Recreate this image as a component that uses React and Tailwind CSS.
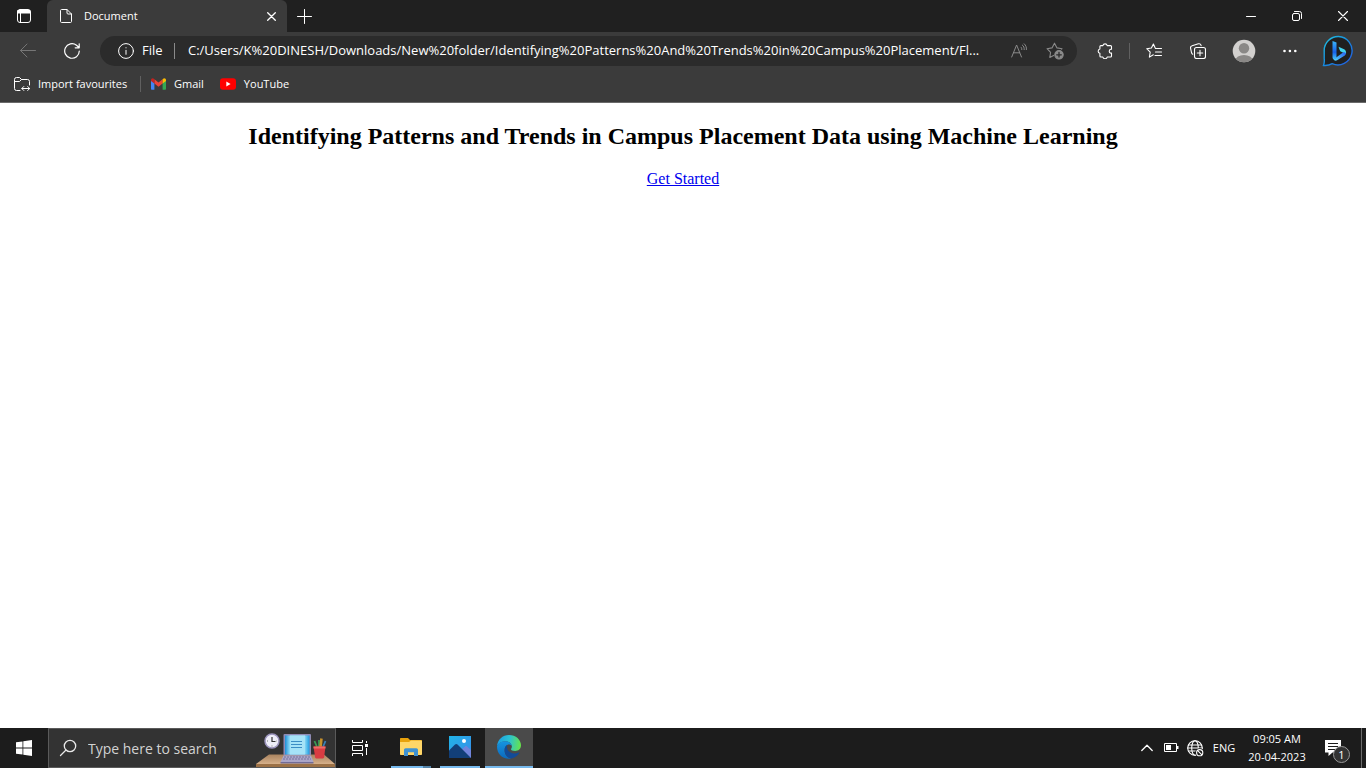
import React from "react";

const uiFont = "font-['Segoe_UI','Open_Sans',sans-serif]";

function Icon({ children, className = "", size = 16, box = 16, width = 1 }) {
  return (
    <svg
      width={size}
      height={size}
      viewBox={`0 0 ${box} ${box}`}
      fill="none"
      stroke="currentColor"
      strokeWidth={width}
      strokeLinecap="round"
      strokeLinejoin="round"
      className={`shrink-0 ${className}`}
      aria-hidden="true"
    >
      {children}
    </svg>
  );
}

function IconButton({ label, className = "", children }) {
  return (
    <button
      type="button"
      aria-label={label}
      className={`flex shrink-0 items-center justify-center ${className}`}
    >
      {children}
    </button>
  );
}

function TitleBar() {
  return (
    <div className="flex h-8 bg-[#202020] text-white">
      <IconButton label="Tab actions menu" className="w-[47px]">
        <Icon>
          <rect x="1.5" y="1.5" width="13" height="13" rx="2.5" />
          <path d="M2 2.5h12v2.5H2z" fill="currentColor" />
          <path d="M4.5 4v10" />
        </Icon>
      </IconButton>
      <div className="flex w-60 items-center rounded-t-md bg-[#3b3b3b] pr-2 pl-3">
        <Icon size={14} box={14}>
          <path d="M1.5 1.5c0-.6.4-1 1-1H8l4.5 4.5v7.5c0 .6-.4 1-1 1h-9c-.6 0-1-.4-1-1z" />
          <path d="M8 .5V4c0 .6.4 1 1 1h3.5" />
        </Icon>
        <span className="ml-[11px] flex-1 text-[11px]">Document</span>
        <IconButton label="Close tab" className="size-4">
          <Icon size={9} box={9} width={1.3}>
            <path d="M.7.7l7.600 7.600M8.300.7L.7 8.300" />
          </Icon>
        </IconButton>
      </div>
      <IconButton label="New tab" className="w-[34px]">
        <Icon>
          <path d="M8.5 1.500v14M1.500 8.500h14" />
        </Icon>
      </IconButton>
      <div className="flex-1" />
      <IconButton label="Minimise" className="w-[46px]">
        <Icon size={10} box={10}>
          <path d="M.5 5.500h9" />
        </Icon>
      </IconButton>
      <IconButton label="Restore" className="w-[46px]">
        <Icon size={10} box={10}>
          <rect x=".5" y="2.500" width="7" height="7" rx="1.500" />
          <path d="M2.500 .5H7.500a2 2 0 0 1 2 2v5" />
        </Icon>
      </IconButton>
      <IconButton label="Close" className="w-[46px]">
        <Icon size={10} box={10} width={1.1}>
          <path d="M.5.5l9 9M9.500.5l-9 9" />
        </Icon>
      </IconButton>
    </div>
  );
}

function BingLogo() {
  return (
    <svg width="32" height="32" viewBox="0 0 32 32" aria-hidden="true">
      <defs>
        <linearGradient id="bing-ring" x1="0" y1="0" x2="1" y2="1">
          <stop offset="0" stopColor="#20c3df" />
          <stop offset=".5" stopColor="#1789df" />
          <stop offset="1" stopColor="#2456df" />
        </linearGradient>
        <linearGradient id="bing-stem" x1="0" y1="0" x2="0" y2="1">
          <stop offset="0" stopColor="#3bb6fa" />
          <stop offset=".6" stopColor="#1860e8" />
          <stop offset="1" stopColor="#42c7ff" />
        </linearGradient>
        <linearGradient id="bing-bowl" x1="1" y1="0" x2="0" y2="1">
          <stop offset="0" stopColor="#285cf0" />
          <stop offset="1" stopColor="#53d8ff" />
        </linearGradient>
      </defs>
      <path
        d="M16.5 1.500a14.200 14.200 0 1 1-6.300 27.200c-2.500 1.500-5 2.100-8.700 1.800 1-2.500 1-4.500.7-6.800V15.500A14 14 0 0 1 16.500 1.500z"
        fill="#202020"
        stroke="url(#bing-ring)"
        strokeWidth="1.400"
      />
      <path d="M10.500 6l4 1.600v15l-2.400 2c-1-.5-1.600-1.300-1.600-2.400z" fill="url(#bing-stem)" />
      <path d="M16.500 11.700l5.600 2.600c1.700 1 2.300 2.600 1.900 4.800l-4.700-2.300c-.8-.4-1.300-1-1.600-1.900z" fill="#42d5ee" />
      <path d="M11.500 24.800c.7.900 2.400 1.200 4 .3l6.500-4c1.200-.8 1.900-1.700 2-3l-2.300-1.100-7.200 5.200z" fill="url(#bing-bowl)" />
    </svg>
  );
}

function Toolbar() {
  return (
    <div className="flex h-[38px] items-center px-1.5 text-white">
      <IconButton label="Back" className="h-8 w-11 text-[#767676]">
        <Icon>
          <path d="M.5 7.500H15.500M7 1L.5 7.500 7 14" />
        </Icon>
      </IconButton>
      <IconButton label="Refresh" className="h-8 w-11">
        <Icon width={1.2}>
          <path d="M15.300 8A7.300 7.300 0 1 1 12.500 2.200L15 4.500M15.200.8v4h-4" />
        </Icon>
      </IconButton>
      <div className="ml-1.5 flex h-[30px] min-w-0 flex-1 items-center rounded-full bg-[#2b2b2b] pr-1 pl-[18px]">
        <Icon>
          <circle cx="8" cy="8" r="7.400" />
          <path d="M8 7.300v4M8 4.700v.2" />
        </Icon>
        <label htmlFor="address" className="ml-2 w-8 text-[13px]">
          File
        </label>
        <span className="h-4 w-px bg-[#8a8a8a]" />
        <input
          id="address"
          type="text"
          defaultValue="C:/Users/K%20DINESH/Downloads/New%20folder/Identifying%20Patterns%20And%20Trends%20in%20Campus%20Placement/Fl..."
          className="ml-[13px] min-w-0 flex-1 bg-transparent text-[13px] outline-none"
        />
        <IconButton label="Read aloud" className="w-9 text-[#8a8a8a]">
          <Icon>
            <path d="M.7 14L5.600 2l4.900 12M2.500 9.800h6.200M10 4.200c.7.700.9 1.400.8 2.400M11.300 2c1.500 1.200 2 2.700 1.900 4.600M13.200.8c1.700 1.600 2.400 3.400 2.200 5.800" />
          </Icon>
        </IconButton>
        <IconButton label="Add to favourites" className="w-9 text-[#8a8a8a]">
          <Icon size={18} box={18} width={1.1}>
            <path d="M15.600 7.200l.4-.5-5-.8L8.500 1.200 6 5.900l-5 .8 3.600 3.600-.8 5.100 3.800-2" />
            <circle cx="13" cy="12.800" r="4.200" fill="currentColor" />
            <path d="M13 10.500v4.600M10.700 12.800h4.600" stroke="#2b2b2b" strokeWidth="1.300" />
          </Icon>
        </IconButton>
      </div>
      <IconButton label="Extensions" className="ml-1.5 h-8 w-11">
        <Icon width={1.1}>
          <path d="M3.900 2.600h2a2.200 2.200 0 0 1 4.300 0h3.300c.6 0 1 .4 1 1v2.600h-.7a2 2 0 0 0 0 3.900h.7v2.900c0 .6-.4 1-1 1h-3.300a2.200 2.200 0 0 1-4.300 0h-2c-.6 0-1-.4-1-1v-2.700a2.200 2.200 0 0 1 0-4.300V3.600c0-.6.4-1 1-1z" />
        </Icon>
      </IconButton>
      <span className="mx-0.5 h-4 w-px bg-[#606060]" />
      <IconButton label="Favourites" className="h-8 w-11">
        <Icon width={1.1}>
          <path d="M9.200 4.900L7.400 1 5.400 5l-4.700.7 3.500 3.400-.8 5 3.900-2.300M9.500 5.500h6M9.500 9h6M9 12.500h6.500" />
        </Icon>
      </IconButton>
      <IconButton label="Collections" className="h-8 w-11">
        <Icon width={1.1}>
          <rect x="4.500" y="4.500" width="11" height="11" rx="2" />
          <path d="M10 7.300v5.400M7.300 10h5.400M2.700 11.300C1.900 10.900 1.700 10.300 1.500 9.500L.6 5.300C.3 4 .9 3.100 2.100 2.800L8.400.8c1.200-.3 2.200.2 2.600 1.400l.1.500" />
        </Icon>
      </IconButton>
      <IconButton label="Profile" className="ml-0.5 h-8 w-11">
        <svg width="24" height="24" viewBox="0 0 24 24" aria-hidden="true">
          <defs>
            <clipPath id="avatar">
              <circle cx="12" cy="12" r="11.300" />
            </clipPath>
          </defs>
          <circle cx="12" cy="12" r="11.300" fill="#d2d0ce" />
          <g clipPath="url(#avatar)" fill="#8a8886">
            <circle cx="12" cy="9.200" r="5.200" />
            <ellipse cx="12" cy="21.500" rx="8.500" ry="5.500" />
          </g>
        </svg>
      </IconButton>
      <IconButton label="Settings and more" className="ml-0.5 h-8 w-11">
        <Icon>
          <g fill="currentColor" stroke="none">
            <circle cx="2.500" cy="8" r="1.300" />
            <circle cx="7.900" cy="8" r="1.300" />
            <circle cx="13.300" cy="8" r="1.300" />
          </g>
        </Icon>
      </IconButton>
      <IconButton label="Discover" className="ml-1 h-8 w-11">
        <BingLogo />
      </IconButton>
    </div>
  );
}

function BookmarksBar() {
  return (
    <nav className="flex h-[33px] items-center border-b border-[#6a6a6a] pb-1 pl-3.5 text-[11px] text-white">
      <button type="button" className="flex items-center gap-2">
        <Icon>
          <path d="M6 14.500H2.500a2 2 0 0 1-2-2v-9a2 2 0 0 1 2-2H5.500L7.500 3.500H13.500a2 2 0 0 1 2 2V9M.5 5.500H5.500L7.500 3.500M8 12.500h7.500M9.800 10.500l-2 2 2 2M13.700 10.500l2 2-2 2" />
        </Icon>
        <span className="w-[92px] text-left whitespace-nowrap">Import favourites</span>
      </button>
      <span className="mx-2.5 h-4 w-px bg-[#606060]" />
      <a href="#gmail" className="flex items-center gap-2">
        <svg width="15" height="12" viewBox="0 0 15 12" aria-hidden="true">
          <path d="M0 2v8.800c0 .6.4 1 1 1h2.400V4.500z" fill="#4285f4" />
          <path d="M15 2v8.800c0 .6-.4 1-1 1h-2.400V4.500z" fill="#34a853" />
          <path d="M3.400 1.200l4.100 3.200 4.100-3.200v4.300L7.500 8.700 3.400 5.500z" fill="#ea4335" />
          <path d="M0 2.200C0 .5 1.800-.3 3.100.9l.3.300v4.300L0 2.900z" fill="#c5221f" />
          <path d="M15 2.200c0-1.700-1.800-2.500-3.100-1.300l-.3.300v4.300L15 2.900z" fill="#fbbc04" />
        </svg>
        Gmail
      </a>
      <a href="#youtube" className="ml-4 flex items-center gap-2">
        <svg width="16" height="12" viewBox="0 0 16 12" aria-hidden="true">
          <rect y=".3" width="16" height="11.400" rx="3" fill="#f00" />
          <path d="M6.300 3.500v5l4.300-2.500z" fill="#fff" />
        </svg>
        YouTube
      </a>
    </nav>
  );
}

function DeskIllustration() {
  return (
    <svg width="80" height="38" viewBox="0 0 80 38" aria-hidden="true">
      <defs>
        <linearGradient id="laptop-screen" x1="0" x2="1">
          <stop offset="0" stopColor="#1e8ed6" />
          <stop offset=".2" stopColor="#8edcf7" />
          <stop offset=".8" stopColor="#8edcf7" />
          <stop offset="1" stopColor="#1e9be0" />
        </linearGradient>
        <linearGradient id="desk-top" x1="0" y1="0" x2="0" y2="1">
          <stop offset="0" stopColor="#a9835f" />
          <stop offset="1" stopColor="#d6b08a" />
        </linearGradient>
      </defs>
      <path d="M14 25.500h55l11 9.500H1z" fill="url(#desk-top)" />
      <path d="M1 35h79v3H1z" fill="#9c7146" />
      <circle cx="17" cy="12" r="7" fill="#eeeef8" stroke="#9b94bd" strokeWidth="1.500" />
      <path d="M17 8V12.500h3.500" fill="none" stroke="#333" strokeWidth="1.200" />
      <path d="M12 12h1M17 16.500v1M21.500 12h.5" stroke="#777" />
      <rect x="28.500" y="5" width="27.500" height="21.500" rx="1" fill="#8f8bb5" />
      <rect x="30" y="6.500" width="24.500" height="19" fill="url(#laptop-screen)" />
      <rect x="35" y="6.500" width="15" height="19" fill="#a5e3f7" />
      <path d="M36 12.500h11M36 15.500h11M36 18.500h11" stroke="#3c8ec5" strokeWidth="1.200" />
      <path d="M28.500 26.500H56l2.500 6.500H25.500z" fill="#aaa5c8" />
      <path d="M29 28h26M28 30h28" stroke="#77739b" strokeDasharray="2 1" />
      <path d="M25.500 33h33v1.500h-33z" fill="#716b96" />
      <path d="M62 18l-2.500-6M64 18V11" stroke="#3a9a55" strokeWidth="1.800" />
      <path d="M65.500 18l1-8.500" stroke="#c8922c" strokeWidth="2.600" />
      <path d="M68 18l2.500-6" stroke="#3980b7" strokeWidth="1.800" />
      <path d="M58.500 17.500h12l-1.400 10.800c-.1.700-.5 1.200-1.200 1.200h-6.600c-.7 0-1.100-.5-1.200-1.200z" fill="#d93c42" />
      <path d="M58.500 17.500h12v2h-12z" fill="#f06a66" />
    </svg>
  );
}

function TaskButton({ label, children, active, underline }) {
  return (
    <button
      type="button"
      aria-label={label}
      className={`flex h-full w-12 flex-col items-center ${active ? "bg-[#4a4a4a]" : ""}`}
    >
      <span className="flex flex-1 items-center">{children}</span>
      <span className={`h-0.5 ${underline}`} />
    </button>
  );
}

function Taskbar() {
  return (
    <footer className="flex h-10 items-center bg-[#1c1c1c] text-white">
      <IconButton label="Start" className="h-full w-12">
        <svg width="16" height="16" viewBox="0 0 16 16" fill="#fff" aria-hidden="true">
          <path d="M0 2.300L6.500 1.400V7.600H0zM7.300 1.300L16 0V7.600H7.300zM0 8.400h6.500v6.200L0 13.700zM7.300 8.400H16V16l-8.700-1.300z" />
        </svg>
      </IconButton>
      <div className="flex h-full w-72 items-center border border-[#5a5a5a] bg-[#333] pl-2.5">
        <Icon size={18} box={18} width={1.3} className="text-[#e8e8e8]">
          <circle cx="11" cy="7" r="5.700" />
          <path d="M7 11L1.500 16.500" />
        </Icon>
        <input
          type="search"
          aria-label="Search"
          placeholder="Type here to search"
          className="ml-[11px] min-w-0 flex-1 bg-transparent text-[14px] outline-none placeholder:text-[#d2d2d2] placeholder:opacity-100"
        />
        <DeskIllustration />
      </div>
      <IconButton label="Task view" className="mr-[3px] h-full w-12">
        <svg width="16" height="16" viewBox="0 0 16 16" fill="none" stroke="#fff" aria-hidden="true">
          <path d="M.5 0v2.500h10V0M.5 16v-2.500h10V16M.5 5.500h10v5H.5zM14.500 1v2M14.500 8v7" />
          <path d="M13 4h3v3h-3z" fill="#fff" stroke="none" />
        </svg>
      </IconButton>
      <div className="flex h-full gap-px">
        <TaskButton
          label="File Explorer"
          underline="w-10 border-r-8 border-[#5484a9] bg-[#76b9ed]"
        >
          <svg width="22" height="20" viewBox="0 0 22 20" aria-hidden="true">
            <path d="M0 2c0-.6.4-1 1-1h7l2 2h11c.6 0 1 .4 1 1v3H0z" fill="#e8a20c" />
            <path d="M0 5h9l2-1.500h10c.6 0 1 .4 1 1V17c0 .6-.4 1-1 1H1c-.6 0-1-.4-1-1z" fill="#ffd668" />
            <path d="M4 19v-6c0-1 .7-1.700 1.700-1.700h10.600c1 0 1.700.7 1.700 1.700v6h-4v-3.700H8V19z" fill="#3f92d2" />
          </svg>
        </TaskButton>
        <TaskButton label="Photos" underline="w-10 bg-[#76b9ed]">
          <svg width="22" height="22" viewBox="0 0 22 22" aria-hidden="true">
            <defs>
              <linearGradient id="photo-sky" x1="0" y1="0" x2="1" y2="1">
                <stop offset="0" stopColor="#20b4e8" />
                <stop offset="1" stopColor="#3a8ae8" />
              </linearGradient>
            </defs>
            <path d="M0 0h22v22H0z" fill="url(#photo-sky)" />
            <path d="M12 14l4-3.500c.7-.6 1.300-.6 2 0l4 3.500v8H12z" fill="#7184db" />
            <path d="M0 14.500l6-6c.8-.8 1.700-.8 2.500 0L22 22H0z" fill="#123f78" />
            <circle cx="15" cy="5" r="2" fill="#fff" />
          </svg>
        </TaskButton>
        <TaskButton label="Microsoft Edge" active underline="w-12 bg-[#76b9ed]">
          <svg width="24" height="24" viewBox="0 0 24 24" aria-hidden="true">
            <defs>
              <linearGradient id="edge-top" x1="0" y1=".4" x2="1" y2=".5">
                <stop offset="0" stopColor="#1b9de2" />
                <stop offset=".5" stopColor="#2bc3d2" />
                <stop offset="1" stopColor="#66e34b" />
              </linearGradient>
              <linearGradient id="edge-wave" x1="0" y1="0" x2="0" y2="1">
                <stop offset="0" stopColor="#1595e0" />
                <stop offset="1" stopColor="#0c69bd" />
              </linearGradient>
            </defs>
            <path d="M0 11.500C.5 4.500 5.600 0 12 0c7 0 12 4.900 12 10.300 0 3.700-2.800 5.700-5.800 5.700-2.600 0-4.200-.8-4.200-1.700 0-.6.9-1.100.9-2.800C14.900 9 12.200 6.300 8.500 6.300 4.500 6.300 1.300 8.400 0 11.500z" fill="url(#edge-top)" />
            <path d="M0 11.500C1 8.200 4.400 6.300 8.500 6.300c3.500 0 6.100 2.200 6.400 4.800-.7-1-1.800-1.500-3-1.500-2.200 0-4.300 2.300-4.300 5.600 0 4.400 3 7.600 6.700 8.300C6.200 25.100 0 19.500 0 11.500z" fill="url(#edge-wave)" />
            <path d="M10 10c-1.300.9-2.400 2.700-2.400 5.200 0 4.400 3.100 7.700 6.700 8.300 3.300-.6 6.400-2.800 7.900-5.500.3-.6-.1-.8-.6-.5-5.500 2.700-12.700-.4-11.600-7.500z" fill="#124b98" />
          </svg>
        </TaskButton>
      </div>
      <div className="flex-1" />
      <div className="flex h-full items-center">
        <IconButton label="Show hidden icons" className="w-6">
          <Icon size={12} box={12} width={1.3}>
            <path d="M.8 8.500L6 3.300l5.200 5.200" />
          </Icon>
        </IconButton>
        <IconButton label="Battery" className="w-6">
          <svg width="16" height="10" viewBox="0 0 16 10" fill="none" stroke="#fff" aria-hidden="true">
            <path d="M1.500 .5h12v8h-12z" />
            <path d="M3 2h5v5H3zM14 3h1.500v3H14z" fill="#fff" stroke="none" />
          </svg>
        </IconButton>
        <IconButton label="Network" className="w-6">
          <Icon size={17} box={17} width={1.1}>
            <circle cx="8" cy="8" r="7.300" />
            <ellipse cx="8" cy="8" rx="3.300" ry="7.300" />
            <path d="M1.500 5h13M1.500 11h7M.7 8h14.500" />
            <circle cx="12.700" cy="12.700" r="4.500" fill="#1c1c1c" stroke="none" />
            <circle cx="12.700" cy="12.700" r="3.100" />
            <path d="M10.700 10.700l4 4" />
          </Icon>
        </IconButton>
        <button type="button" aria-label="Language: ENG" className="w-[34px] text-center text-[11px]">
          ENG
        </button>
        <button
          type="button"
          className="flex w-[72px] flex-col items-center text-[11px] leading-[18px] whitespace-nowrap"
        >
          <span>09:05 AM</span>
          <span>20-04-2023</span>
        </button>
        <IconButton label="Notifications, 1 new" className="h-full w-12">
          <span className="relative block h-6 w-6">
            <svg width="17" height="17" viewBox="0 0 17 17" className="mt-1" aria-hidden="true">
              <path d="M0 0h16v12.500H7.500L3.500 16v-3.500H0z" fill="#fff" />
              <path d="M3 3.500h10M3 6.500h10M3 9.500h7" stroke="#1c1c1c" />
            </svg>
            <span className="absolute top-2.5 left-2 flex size-[17px] items-center justify-center rounded-full border border-[#999] bg-[#333] text-[11px] leading-none">
              1
            </span>
          </span>
        </IconButton>
        <span className="mr-1 h-full w-px bg-[#6b6b6b]" />
      </div>
    </footer>
  );
}

export default function App() {
  return (
    <div className={`flex min-h-screen flex-col bg-white ${uiFont}`}>
      <header className="bg-[#3b3b3b]">
        <TitleBar />
        <Toolbar />
        <BookmarksBar />
      </header>
      <main className="flex flex-1 flex-col items-center gap-5 py-5 font-['Liberation_Serif',serif] text-black">
        <h2 className="text-center text-[24px] leading-[27px] font-bold">
          Identifying Patterns and Trends in Campus Placement Data using Machine Learning
        </h2>
        <a href="#get-started" className="text-[16px] leading-[18px] text-[#0000ee] underline">
          Get Started
        </a>
      </main>
      <Taskbar />
    </div>
  );
}
